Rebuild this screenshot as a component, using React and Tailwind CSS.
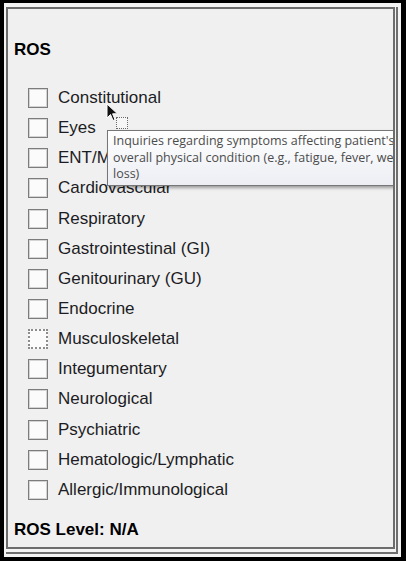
const SYSTEMS = [
  'Constitutional',
  'Eyes',
  'ENT/Mouth',
  'Cardiovascular',
  'Respiratory',
  'Gastrointestinal (GI)',
  'Genitourinary (GU)',
  'Endocrine',
  'Musculoskeletal',
  'Integumentary',
  'Neurological',
  'Psychiatric',
  'Hematologic/Lymphatic',
  'Allergic/Immunological',
];

const Checkbox = ({ focused }) => (
  <span
    className={
      focused
        ? 'w-[20px] h-[20px] shrink-0 bg-[#fbfbfb] border-2 border-dotted border-[#8c8c8c]'
        : 'w-[20px] h-[20px] shrink-0 bg-[#fbfbfb] border border-[#7c7c7c] shadow-[inset_0_0_0_1px_#d4d4d4]'
    }
  />
);

const Cursor = () => (
  <svg className="absolute left-[98px] top-[94px]" width="13" height="20" viewBox="0 0 13 20">
    <path d="M1 1 L1 15 L4.5 11.5 L7 17.5 L9 16.6 L6.6 10.8 L11.5 10.8 Z" fill="#111" stroke="#fff" strokeWidth="1" />
  </svg>
);

const App = () => {
  return (
    <div className="w-[406px] h-[561px] bg-black pt-[3px] pl-[4px] pr-[5px] pb-[4px]" style={{ fontFamily: '"Liberation Sans", Arial, sans-serif' }}>
      {/* light outer frame */}
      <div className="h-full bg-[#f4f4f4] pt-[4px] pl-[2px] pr-[3px] pb-[3px]">
        {/* double line on right / bottom */}
        <div className="h-full border-r-2 border-b-2 border-[#6f6f6f] pr-[1px] pb-[3px] bg-[#f4f4f4]">
          {/* content panel */}
          <div className="relative h-full overflow-hidden border-2 border-[#6d6d6d] bg-[#f0f0f0] text-[#1c1c24] pl-[6px] pt-[31px]">
            <div className="text-[17px] leading-[20px] font-bold text-black">ROS</div>

            <div className="mt-[23px] pl-[14px] flex flex-col">
              {SYSTEMS.map((name, i) => (
                <div key={name} className="h-[30.15px] flex items-center gap-[10px]">
                  <Checkbox focused={i === 8} />
                  <span className="text-[17px] leading-[20px]">{name}</span>
                </div>
              ))}
            </div>

            <div className="mt-[15px] text-[17px] leading-[20px] font-bold text-black">ROS Level: N/A</div>

            {/* hover target + tooltip */}
            <span className="absolute left-[108px] top-[108px] w-[12px] h-[12px] border border-dotted border-[#6a6a6a] bg-[#f6f6f6]" />
            <Cursor />
            <div
              className="absolute left-[99px] top-[121px] w-[320px] border border-[#767676] bg-gradient-to-b from-[#ffffff] to-[#eceef4] shadow-[2px_2px_3px_rgba(0,0,0,0.35)] px-[5px] pt-[2px] pb-[2px] text-[12.5px] leading-[16.5px] text-[#4c4c4c]"
              style={{ fontFamily: '"Open Sans", "Noto Sans", sans-serif' }}
            >
              Inquiries regarding symptoms affecting patient's overall physical condition (e.g., fatigue, fever, weight loss)
            </div>
          </div>
        </div>
      </div>
    </div>
  );
};

export default App;
